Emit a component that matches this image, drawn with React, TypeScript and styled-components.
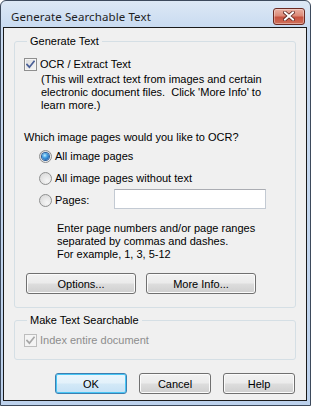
import React from 'react'
import styled, { createGlobalStyle, css } from 'styled-components'

const GlobalStyle = createGlobalStyle`
    html, body {
        margin: 0;
        padding: 0;
        background: #ffffff;
    }
    * {
        box-sizing: border-box;
    }
`

const UI_FONT = `'Liberation Sans', Arial, sans-serif`

const Frame = styled.div`
    width: 311px;
    height: 406px;
    display: flex;
    flex-direction: column;
    border: 1px solid #3d4a5c;
    border-radius: 6px 6px 0 0;
    background: linear-gradient(180deg, #dde8f5 0px, #c9dbf1 26px, #bcd1ec 100%);
    padding: 0 3px 4px 2px;
    font-family: ${UI_FONT};
    font-size: 11px;
    color: #000;
`

const TitleBar = styled.div`
    height: 26px;
    flex: none;
    display: flex;
    align-items: center;
    padding: 4px 0 0 8px;
`

const Title = styled.div`
    flex: 1;
    font-family: 'Noto Sans', 'Liberation Sans', sans-serif;
    font-size: 11.5px;
    color: #1e1e1e;
    letter-spacing: 0.1px;
`

const CloseButton = styled.div`
    width: 32px;
    height: 17px;
    margin-right: 2px;
    border: 1px solid #6b2a22;
    border-radius: 3px;
    background: linear-gradient(180deg, #eab0a2 0%, #dc8a78 45%, #c6523f 55%, #d0705a 100%);
    box-shadow: inset 0 0 0 1px rgba(255, 255, 255, 0.35);
    display: flex;
    align-items: center;
    justify-content: center;
`

const Client = styled.div`
    flex: 1;
    border: 1px solid #1a1a1a;
    background: #f0f0f0;
    padding: 0 10px 0 10px;
    display: flex;
    flex-direction: column;
`

const Group = styled.fieldset<{ $top: number; $bottom: number }>`
    margin: ${(p) => p.$top}px 0 0 0;
    padding: 0 0 ${(p) => p.$bottom}px 9px;
    border: 1px solid #d5dfe5;
    border-radius: 3px;
    min-inline-size: 0;
`

const Legend = styled.legend`
    margin-left: 3px;
    padding: 0 3px;
    line-height: 13px;
    color: #000;
`

const Row = styled.label<{ $top?: number; $disabled?: boolean }>`
    display: flex;
    align-items: center;
    gap: 3px;
    height: 13px;
    margin-top: ${(p) => p.$top ?? 0}px;
    line-height: 13px;
    color: ${(p) => (p.$disabled ? '#8d8d8d' : '#000')};
`

const BoxMark = styled.span<{ $disabled?: boolean }>`
    width: 13px;
    height: 13px;
    flex: none;
    border: 1px solid #8f8f8f;
    background: linear-gradient(135deg, #dcdcdc 0%, #f6f6f6 100%);
    box-shadow: inset 0 0 0 1px #f4f4f4;
    display: flex;
    align-items: center;
    justify-content: center;
    ${(p) => p.$disabled && css`
        border-color: #bdbdbd;
        background: #f4f4f4;
    `}
`

const Note = styled.div<{ $left: number; $top?: number }>`
    padding-left: ${(p) => p.$left}px;
    margin-top: ${(p) => p.$top ?? 0}px;
    line-height: 13px;
`

const RadioList = styled.div`
    display: flex;
    flex-direction: column;
    margin-top: 1px;
    padding-left: 15px;
`

const RadioRow = styled.label`
    display: flex;
    align-items: center;
    height: 22px;
    gap: 3px;
`

const RadioLabel = styled.span<{ $width?: number }>`
    width: ${(p) => (p.$width ? `${p.$width}px` : 'auto')};
`

const RadioDot = styled.span<{ $on?: boolean }>`
    width: 13px;
    height: 13px;
    flex: none;
    border-radius: 50%;
    border: 1px solid #8e8f8f;
    background: radial-gradient(circle at 65% 70%, #f6f6f6 0%, #e2e2e2 60%, #d4d4d4 100%);
    display: flex;
    align-items: center;
    justify-content: center;
    ${(p) => p.$on && css`
        &::after {
            content: '';
            width: 7px;
            height: 7px;
            border-radius: 50%;
            background: radial-gradient(circle at 40% 35%, #c4ecff 0%, #4aa7e6 35%, #1a5fb0 80%, #174d8f 100%);
            box-shadow: 0 0 0 1px #2a5d9a;
        }
    `}
`

const PagesInput = styled.input`
    width: 152px;
    height: 20px;
    margin: -2px 0 0 0;
    border: 1px solid #c3cad3;
    border-top-color: #abadb3;
    background: #fff;
    font-family: ${UI_FONT};
    font-size: 11px;
    padding: 0 3px;
    outline: none;
`

const ButtonRow = styled.div<{ $left: number; $top: number; $gap: number; $end?: boolean }>`
    display: flex;
    gap: ${(p) => p.$gap}px;
    margin: ${(p) => p.$top}px 0 0 ${(p) => p.$left}px;
    justify-content: ${(p) => (p.$end ? 'flex-end' : 'flex-start')};
    padding-right: ${(p) => (p.$end ? 1 : 0)}px;
`

const PushButton = styled.button<{ $width: number; $default?: boolean }>`
    width: ${(p) => p.$width}px;
    height: 21px;
    border: 1px solid #707070;
    border-radius: 3px;
    background: linear-gradient(180deg, #f2f2f2 0%, #ebebeb 48%, #dddddd 52%, #cfcfcf 100%);
    box-shadow: inset 0 0 0 1px #fbfbfb;
    font-family: ${UI_FONT};
    font-size: 11px;
    color: #000;
    padding: 0;
    ${(p) => p.$default && css`
        border-color: #3c7fb1;
        box-shadow: inset 0 0 0 1px #48c6f5;
        background: linear-gradient(180deg, #eaf6fd 0%, #e3f1fa 48%, #d3e9f7 52%, #c6e1f5 100%);
    `}
`

const Check = ({ color }: { color: string }) => (
    <svg width="9" height="9" viewBox="0 0 9 9">
        <path d="M1 4.6 L3.4 7.2 L8 1.4" fill="none" stroke={color} strokeWidth="1.8" strokeLinecap="square" />
    </svg>
)

const CloseGlyph = () => (
    <svg width="12" height="10" viewBox="0 0 12 10">
        <path d="M2 1.5 L10 8.5 M10 1.5 L2 8.5" stroke="#5a2620" strokeWidth="3.6" strokeLinecap="square" />
        <path d="M2 1.5 L10 8.5 M10 1.5 L2 8.5" stroke="#ffffff" strokeWidth="2" strokeLinecap="square" />
    </svg>
)

const App = () => (
    <>
        <GlobalStyle />
        <Frame>
            <TitleBar>
                <Title>Generate Searchable Text</Title>
                <CloseButton>
                    <CloseGlyph />
                </CloseButton>
            </TitleBar>
            <Client>
                <Group $top={7} $bottom={13}>
                    <Legend>Generate Text</Legend>
                    <Row $top={10}>
                        <BoxMark>
                            <Check color="#4a5f97" />
                        </BoxMark>
                        OCR / Extract Text
                    </Row>
                    <Note $left={17} $top={2}>
                        (This will extract text from images and certain
                        <br />
                        electronic document files.&nbsp; Click 'More Info' to
                        <br />
                        learn more.)
                    </Note>
                    <Note $left={0} $top={19}>
                        Which image pages would you like to OCR?
                    </Note>
                    <RadioList>
                        <RadioRow>
                            <RadioDot $on />
                            All image pages
                        </RadioRow>
                        <RadioRow>
                            <RadioDot />
                            All image pages without text
                        </RadioRow>
                        <RadioRow>
                            <RadioDot />
                            <RadioLabel $width={56}>Pages:</RadioLabel>
                            <PagesInput />
                        </RadioRow>
                    </RadioList>
                    <Note $left={33} $top={11}>
                        Enter page numbers and/or page ranges
                        <br />
                        separated by commas and dashes.
                        <br />
                        For example, 1, 3, 5-12
                    </Note>
                    <ButtonRow $left={2} $top={12} $gap={10}>
                        <PushButton $width={110}>Options...</PushButton>
                        <PushButton $width={110}>More Info...</PushButton>
                    </ButtonRow>
                </Group>
                <Group $top={6} $bottom={12}>
                    <Legend>Make Text Searchable</Legend>
                    <Row $top={7} $disabled>
                        <BoxMark $disabled>
                            <Check color="#a7a7a7" />
                        </BoxMark>
                        Index entire document
                    </Row>
                </Group>
                <ButtonRow $left={0} $top={13} $gap={12} $end>
                    <PushButton $width={72} $default>OK</PushButton>
                    <PushButton $width={72}>Cancel</PushButton>
                    <PushButton $width={72}>Help</PushButton>
                </ButtonRow>
            </Client>
        </Frame>
    </>
)

export default App
